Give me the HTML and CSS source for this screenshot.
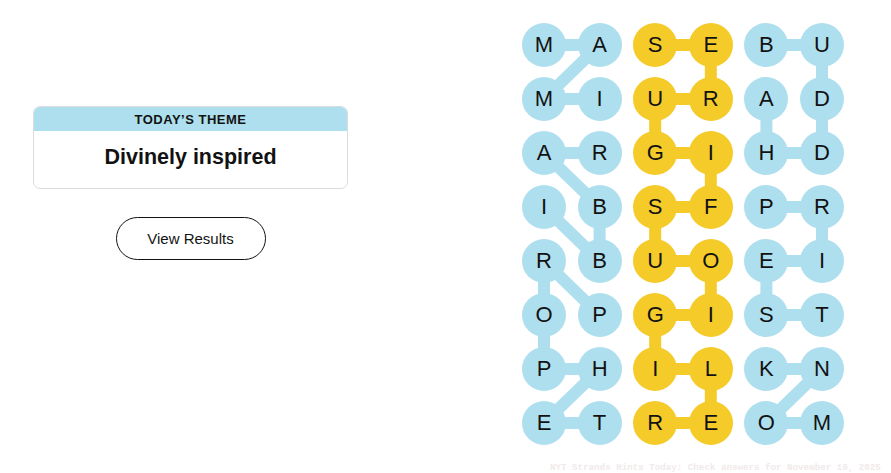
FILE: index.html
```html
<!DOCTYPE html>
<html lang="en">
<head>
<meta charset="utf-8">
<title>Strands</title>
<link rel="stylesheet" href="styles.css">
</head>
<body>
<main class="page">
  <section class="side">
    <div class="theme-card">
      <div class="theme-head">TODAY’S THEME</div>
      <div class="theme-body">Divinely inspired</div>
    </div>
    <button class="results-btn" type="button">View Results</button>
  </section>

  <section class="board">
    <svg class="links" width="322" height="422" viewBox="0 0 322 422" aria-hidden="true">
      <g stroke-width="12" stroke-linecap="butt" fill="none">
        <!-- IMAM -->
        <g stroke="#aedfee">
          <line x1="22" y1="22" x2="77.6" y2="22"/>
          <line x1="77.6" y1="22" x2="22" y2="76"/>
          <line x1="22" y1="76" x2="77.6" y2="76"/>
          <!-- RABBI -->
          <line x1="77.6" y1="130" x2="22" y2="130"/>
          <line x1="22" y1="130" x2="77.6" y2="184"/>
          <line x1="77.6" y1="184" x2="77.6" y2="238"/>
          <line x1="77.6" y1="238" x2="22" y2="184"/>
          <!-- PROPHET -->
          <line x1="77.6" y1="292" x2="22" y2="238"/>
          <line x1="22" y1="238" x2="22" y2="292"/>
          <line x1="22" y1="292" x2="22" y2="346"/>
          <line x1="22" y1="346" x2="77.6" y2="346"/>
          <line x1="77.6" y1="346" x2="22" y2="400"/>
          <line x1="22" y1="400" x2="77.6" y2="400"/>
          <!-- BUDDHA -->
          <line x1="244.4" y1="22" x2="300" y2="22"/>
          <line x1="300" y1="22" x2="300" y2="76"/>
          <line x1="300" y1="76" x2="300" y2="130"/>
          <line x1="300" y1="130" x2="244.4" y2="130"/>
          <line x1="244.4" y1="130" x2="244.4" y2="76"/>
          <!-- PRIEST -->
          <line x1="244.4" y1="184" x2="300" y2="184"/>
          <line x1="300" y1="184" x2="300" y2="238"/>
          <line x1="300" y1="238" x2="244.4" y2="238"/>
          <line x1="244.4" y1="238" x2="244.4" y2="292"/>
          <line x1="244.4" y1="292" x2="300" y2="292"/>
          <!-- MONK -->
          <line x1="300" y1="400" x2="244.4" y2="400"/>
          <line x1="244.4" y1="400" x2="300" y2="346"/>
          <line x1="300" y1="346" x2="244.4" y2="346"/>
        </g>
        <!-- RELIGIOUS FIGURES -->
        <g stroke="#f5cb2a">
          <line x1="133.2" y1="22" x2="188.8" y2="22"/>
          <line x1="188.8" y1="22" x2="188.8" y2="76"/>
          <line x1="188.8" y1="76" x2="133.2" y2="76"/>
          <line x1="133.2" y1="76" x2="133.2" y2="130"/>
          <line x1="133.2" y1="130" x2="188.8" y2="130"/>
          <line x1="188.8" y1="130" x2="188.8" y2="184"/>
          <line x1="188.8" y1="184" x2="133.2" y2="184"/>
          <line x1="133.2" y1="184" x2="133.2" y2="238"/>
          <line x1="133.2" y1="238" x2="188.8" y2="238"/>
          <line x1="188.8" y1="238" x2="188.8" y2="292"/>
          <line x1="188.8" y1="292" x2="133.2" y2="292"/>
          <line x1="133.2" y1="292" x2="133.2" y2="346"/>
          <line x1="133.2" y1="346" x2="188.8" y2="346"/>
          <line x1="188.8" y1="346" x2="188.8" y2="400"/>
          <line x1="188.8" y1="400" x2="133.2" y2="400"/>
        </g>
      </g>
    </svg>
    <div class="grid">
      <span class="cell b">M</span><span class="cell b">A</span><span class="cell y">S</span><span class="cell y">E</span><span class="cell b">B</span><span class="cell b">U</span>
      <span class="cell b">M</span><span class="cell b">I</span><span class="cell y">U</span><span class="cell y">R</span><span class="cell b">A</span><span class="cell b">D</span>
      <span class="cell b">A</span><span class="cell b">R</span><span class="cell y">G</span><span class="cell y">I</span><span class="cell b">H</span><span class="cell b">D</span>
      <span class="cell b">I</span><span class="cell b">B</span><span class="cell y">S</span><span class="cell y">F</span><span class="cell b">P</span><span class="cell b">R</span>
      <span class="cell b">R</span><span class="cell b">B</span><span class="cell y">U</span><span class="cell y">O</span><span class="cell b">E</span><span class="cell b">I</span>
      <span class="cell b">O</span><span class="cell b">P</span><span class="cell y">G</span><span class="cell y">I</span><span class="cell b">S</span><span class="cell b">T</span>
      <span class="cell b">P</span><span class="cell b">H</span><span class="cell y">I</span><span class="cell y">L</span><span class="cell b">K</span><span class="cell b">N</span>
      <span class="cell b">E</span><span class="cell b">T</span><span class="cell y">R</span><span class="cell y">E</span><span class="cell b">O</span><span class="cell b">M</span>
    </div>
  </section>
</main>
<div class="watermark">NYT Strands Hints Today: Check answers for November 19, 2025</div>
</body>
</html>
```

FILE: styles.css
```css
* { box-sizing: border-box; }

html, body {
  margin: 0;
  padding: 0;
  background: #ffffff;
  width: 891px;
  height: 473px;
  overflow: hidden;
}

body {
  font-family: "Liberation Sans", Arial, sans-serif;
  color: #121212;
  position: relative;
}

.page {
  display: flex;
  align-items: flex-start;
  padding: 23px 0 0 33px;
}

.side {
  width: 315px;
  margin-top: 83px;
  display: flex;
  flex-direction: column;
  align-items: center;
}

.theme-card {
  width: 315px;
  border: 1px solid #dcdcdc;
  border-radius: 7px;
  overflow: hidden;
  background: #fff;
}

.theme-head {
  background: #aedfee;
  height: 24px;
  line-height: 25px;
  text-align: center;
  font-size: 13px;
  font-weight: 700;
  letter-spacing: 0.5px;
  color: #121212;
}

.theme-body {
  height: 57px;
  line-height: 53px;
  text-align: center;
  font-size: 21.5px;
  font-weight: 700;
  color: #121212;
}

.results-btn {
  margin-top: 28px;
  width: 150px;
  height: 43px;
  border: 1px solid #121212;
  border-radius: 22px;
  background: #fff;
  font-family: "Liberation Sans", Arial, sans-serif;
  font-size: 15px;
  color: #121212;
  padding: 0;
}

.board {
  position: relative;
  margin-left: 174px;
  width: 322px;
  height: 422px;
}

.links {
  position: absolute;
  left: 0;
  top: 0;
}

.grid {
  position: relative;
  display: grid;
  grid-template-columns: repeat(6, 44px);
  grid-auto-rows: 44px;
  column-gap: 11.6px;
  row-gap: 10px;
}

.cell {
  width: 44px;
  height: 44px;
  border-radius: 50%;
  display: flex;
  align-items: center;
  justify-content: center;
  font-size: 22px;
  color: #121212;
  line-height: 1;
}

.cell.b { background: #aedfee; }
.cell.y { background: #f5cb2a; }

.watermark {
  position: absolute;
  left: 550px;
  top: 462px;
  font-family: "Liberation Mono", monospace;
  font-weight: 700;
  font-size: 9.2px;
  color: #f1eaea;
  white-space: nowrap;
}
```
